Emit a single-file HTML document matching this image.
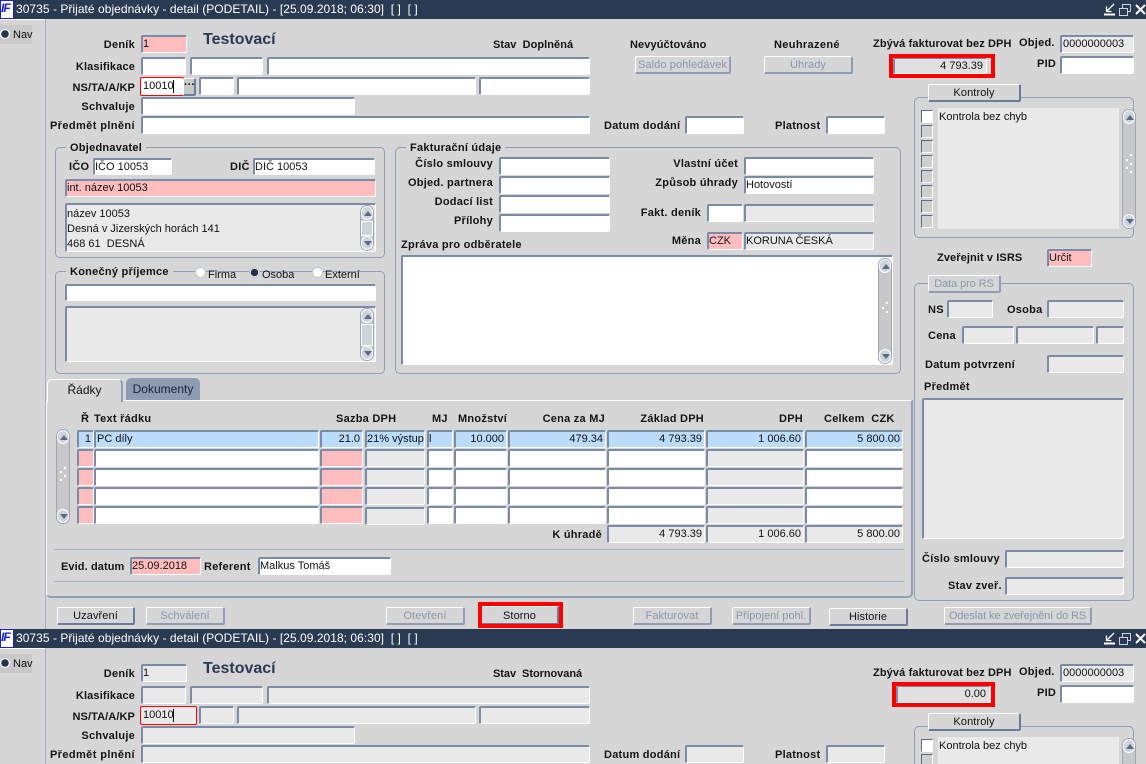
<!DOCTYPE html>
<html><head><meta charset="utf-8"><style>
html,body{margin:0;padding:0;width:1146px;height:764px;overflow:hidden;background:#d6d6d6}
body{position:relative;font:11px "Liberation Sans",Arial,sans-serif;color:#111}
div,span,svg{position:absolute;box-sizing:border-box}
.t{left:0;width:1146px;height:19px;background:#2a3a52;color:#fff;font-size:12px;line-height:19px;white-space:pre;letter-spacing:.04px}
.f{background:#fff;border:1px solid #fff;border-top:2px solid #7b8aa7;border-left:2px solid #7b8aa7;border-radius:2px;padding-left:0;line-height:14px;white-space:nowrap;overflow:hidden;font-size:11px}
.g{background:#e9e9e9}.p{background:#ffbdbd}.b{background:#bcdcfc}.r{text-align:right;padding-right:2px}
.l{font-weight:bold;white-space:nowrap;line-height:14px;letter-spacing:.25px;color:#141414}
.n{white-space:nowrap;line-height:14px}
.o{border:1px solid #8f9eb6;border-radius:5px}
.h{background:#d6d6d6;padding:0 4px;font-weight:bold;line-height:14px;white-space:nowrap;letter-spacing:.25px}
.btn{background:#d6d6d6;border:1px solid #fff;border-right:2px solid #6b7b9b;border-bottom:2px solid #6b7b9b;border-radius:2px;text-align:center;line-height:17px;white-space:nowrap;letter-spacing:.1px}
.dis{color:#8a97ad;border-color:#fff #8f9eb6 #8f9eb6 #fff}
.s{background:#c8c8c8;border:1px solid #9aa6bb;border-radius:7px}
.sb{left:0;width:100%;height:14px;background:#cfd3da;border:1px solid #fff;border-radius:6px}
.up,.dn{left:2px;width:0;height:0;border-left:4px solid transparent;border-right:4px solid transparent}
.up{top:4px;border-bottom:5px solid #5a6a8a}.dn{top:4px;border-top:5px solid #5a6a8a}
.c{width:12px;height:13px;background:#cfcfcf;border:1px solid #fff;border-top:1px solid #5a6a8a;border-left:1px solid #5a6a8a}
.rd{width:11px;height:11px;border-radius:50%;background:#fff;border:1px solid #c0c8d4}
.rk{background:radial-gradient(circle,#263248 0 3.5px,#fff 4px)}
.ln{height:1px;background:#a3afc3}
.rb{border:4px solid #f00}
.dot{width:2px;height:2px;background:#fff}
</style></head><body>

<div class="t" style="top:0"><div style="left:0;top:0;width:14px;height:19px;background:#fff;border:1px solid #1a22c8;color:#1a22c8;font:italic bold 12px/15px 'Liberation Sans',sans-serif;padding-left:0;letter-spacing:-1px">IF</div><span style="left:16px;top:0">30735 - Přijaté objednávky - detail (PODETAIL) - [25.09.2018; 06:30]  [ ]  [ ]</span>
<svg style="left:1102px;top:2px" width="44" height="15" fill="none" stroke="#fff"><path d="M2 12.500h11" stroke-width="2"/><path d="M12 2L5 9M4.500 4.500v5h5" stroke-width="1.300"/><path d="M17.500 6.500h8v7h-8zM20.500 6V2.500h8v7H26" stroke="#cdd3dc" stroke-width="1"/><path d="M34 3l9 9M43 3l-9 9" stroke-width="2"/></svg></div>
<div style="left:0;top:25px;width:32px;height:19px;background:#c9c9c9"></div>
<div class="rd rk" style="left:-1px;top:28px;width:12px;height:12px"></div><span class="n" style="left:13px;top:28px">Nav</span>
<div style="left:45px;top:19px;width:1px;height:610px;background:#a3afc3"></div>
<div style="left:0;top:19px;width:45px;height:1px;background:#fff"></div>

<span class="l" style="right:1011px;top:38px">Deník</span><div class="f p" style="left:141px;top:35px;width:46px;height:18px">1</div>
<span class="l" style="left:203px;top:32px;font-size:16px;line-height:16px;color:#2a3a52;letter-spacing:0">Testovací</span>
<span class="l" style="right:1011px;top:60px;letter-spacing:.15px">Klasifikace</span>
<div class="f" style="left:141px;top:57px;width:45px;height:18px"></div><div class="f" style="left:190px;top:57px;width:73px;height:18px"></div><div class="f" style="left:267px;top:57px;width:323px;height:18px"></div>
<span class="l" style="right:1011px;top:81px;letter-spacing:.1px">NS/TA/A/KP</span>
<div class="f" style="left:140px;top:77px;width:44px;height:19px;border:1px solid #f00;background:#fff;line-height:17px;padding-left:2px">10010<span style="left:32px;top:2px;width:1px;height:13px;background:#000"></span></div>
<div class="btn" style="left:183px;top:78px;width:13px;height:18px;background:#c8c8c8;font-weight:bold;line-height:12px;letter-spacing:0">···</div>
<div class="f" style="left:199px;top:77px;width:35px;height:18px"></div><div class="f" style="left:237px;top:77px;width:239px;height:18px"></div><div class="f" style="left:479px;top:77px;width:111px;height:18px"></div>
<span class="l" style="right:1011px;top:100px">Schvaluje</span><div class="f" style="left:141px;top:97px;width:214px;height:18px"></div>
<span class="l" style="right:1011px;top:119px;letter-spacing:.4px">Předmět plnění</span><div class="f" style="left:141px;top:116px;width:449px;height:18px"></div>

<span class="l" style="left:493px;top:38px;letter-spacing:.05px">Stav&nbsp; Doplněná</span>
<span class="l" style="left:630px;top:38px;letter-spacing:.1px">Nevyúčtováno</span><span class="l" style="left:774px;top:38px;letter-spacing:.35px">Neuhrazené</span>
<div class="btn dis" style="left:635px;top:56px;width:96px;height:18px">Saldo pohledávek</div>
<div class="btn dis" style="left:764px;top:56px;width:89px;height:18px">Úhrady</div>
<span class="l" style="left:604px;top:119px">Datum dodání</span><div class="f" style="left:685px;top:116px;width:59px;height:18px"></div>
<span class="l" style="left:775px;top:119px">Platnost</span><div class="f" style="left:826px;top:116px;width:59px;height:18px"></div>

<span class="l" style="left:873px;top:37px;letter-spacing:.12px">Zbývá fakturovat bez DPH</span>
<span class="l" style="left:1019px;top:36px">Objed.</span><div class="f g" style="left:1060px;top:35px;width:74px;height:18px;padding-left:1px">0000000003</div>
<span class="l" style="left:1037px;top:57px">PID</span><div class="f" style="left:1060px;top:56px;width:74px;height:18px"></div>
<div class="rb" style="left:889px;top:54px;width:106px;height:24px"></div><div class="f r g" style="left:893px;top:58px;width:94px;height:16px;background:#e0e0e0;line-height:15px;border-top-width:1px;padding-right:3px">4 793.39</div>

<div class="o" style="left:914px;top:97px;width:220px;height:141px"></div>
<div class="btn" style="left:928px;top:84px;width:93px;height:18px">Kontroly</div>
<div style="left:938px;top:108px;width:181px;height:121px;background:#e9e9e9"></div>
<span class="n" style="left:939px;top:110px">Kontrola bez chyb</span>
<div class="c" style="left:921px;top:110px;background:#fff"></div>
<div class="c" style="left:921px;top:125px"></div><div class="c" style="left:921px;top:140px"></div><div class="c" style="left:921px;top:155px"></div><div class="c" style="left:921px;top:170px"></div><div class="c" style="left:921px;top:185px"></div><div class="c" style="left:921px;top:200px"></div><div class="c" style="left:921px;top:215px"></div>
<div class="s" style="left:1122px;top:109px;width:14px;height:120px"><div class="sb" style="top:0"><div class="up"></div></div><div class="sb" style="bottom:0"><div class="dn"></div></div><div class="dot" style="left:7px;top:44px"></div><div class="dot" style="left:3px;top:49px"></div><div class="dot" style="left:7px;top:53px"></div><div class="dot" style="left:3px;top:57px"></div><div class="dot" style="left:7px;top:61px"></div></div>

<span class="l" style="left:937px;top:251px;letter-spacing:.1px">Zveřejnit v ISRS</span><div class="f p" style="left:1047px;top:249px;width:45px;height:18px">Určit</div>

<div class="o" style="left:914px;top:283px;width:220px;height:318px"></div>
<div class="btn dis" style="left:928px;top:275px;width:73px;height:18px;letter-spacing:-.1px">Data pro RS</div>
<span class="l" style="left:928px;top:303px">NS</span><div class="f g" style="left:947px;top:300px;width:46px;height:18px"></div>
<span class="l" style="left:1007px;top:303px">Osoba</span><div class="f g" style="left:1047px;top:300px;width:77px;height:18px"></div>
<span class="l" style="left:928px;top:329px">Cena</span><div class="f g" style="left:962px;top:326px;width:52px;height:18px"></div><div class="f g" style="left:1016px;top:326px;width:78px;height:18px"></div><div class="f g" style="left:1096px;top:326px;width:28px;height:18px"></div>
<span class="l" style="left:925px;top:358px">Datum potvrzení</span><div class="f g" style="left:1047px;top:355px;width:77px;height:18px"></div>
<span class="l" style="left:924px;top:380px">Předmět</span><div class="f g" style="left:922px;top:398px;width:202px;height:141px"></div>
<span class="l" style="left:922px;top:552px">Číslo smlouvy</span><div class="f g" style="left:1005px;top:550px;width:119px;height:18px"></div>
<span class="l" style="left:948px;top:579px">Stav zveř.</span><div class="f g" style="left:1005px;top:577px;width:119px;height:18px"></div>

<div class="o" style="left:55px;top:147px;width:330px;height:111px"></div><span class="h" style="left:66px;top:141px">Objednavatel</span>
<span class="l" style="left:69px;top:160px">IČO</span><div class="f" style="left:93px;top:158px;width:79px;height:17px">IČO 10053</div>
<span class="l" style="left:230px;top:160px">DIČ</span><div class="f" style="left:253px;top:158px;width:122px;height:17px">DIČ 10053</div>
<div class="f p" style="left:65px;top:179px;width:311px;height:18px">int. název 10053</div>
<div class="f g" style="left:65px;top:203px;width:311px;height:49px;line-height:15px;padding-top:2px">název 10053<br>Desná v Jizerských horách 141<br>468 61&nbsp; DESNÁ</div>
<div class="s" style="left:360px;top:205px;width:14px;height:46px"><div class="sb" style="top:0"><div class="up"></div></div><div class="sb" style="top:15px;height:15px;border-radius:0"></div><div class="sb" style="bottom:0"><div class="dn"></div></div></div>

<div class="o" style="left:55px;top:271px;width:330px;height:103px"></div><span class="h" style="left:66px;top:265px">Konečný příjemce</span>
<div class="rd" style="left:195px;top:267px"></div><span class="n" style="left:208px;top:268px">Firma</span>
<div class="rd rk" style="left:249px;top:267px"></div><span class="n" style="left:262px;top:268px">Osoba</span>
<div class="rd" style="left:312px;top:267px"></div><span class="n" style="left:325px;top:268px">Externí</span>
<div class="f" style="left:65px;top:284px;width:311px;height:17px"></div>
<div class="f g" style="left:65px;top:306px;width:311px;height:56px"></div>
<div class="s" style="left:360px;top:308px;width:14px;height:53px"><div class="sb" style="top:0"><div class="up"></div></div><div class="sb" style="top:15px;height:22px;border-radius:0"></div><div class="sb" style="bottom:0"><div class="dn"></div></div></div>

<div class="o" style="left:395px;top:147px;width:506px;height:227px"></div><span class="h" style="left:406px;top:141px">Fakturační údaje</span>
<span class="l" style="right:653px;top:157px">Číslo smlouvy</span><div class="f" style="left:499px;top:157px;width:111px;height:18px"></div>
<span class="l" style="right:653px;top:176px">Objed. partnera</span><div class="f" style="left:499px;top:176px;width:111px;height:18px"></div>
<span class="l" style="right:653px;top:195px">Dodací list</span><div class="f" style="left:499px;top:195px;width:111px;height:18px"></div>
<span class="l" style="right:653px;top:214px">Přílohy</span><div class="f" style="left:499px;top:214px;width:111px;height:18px"></div>
<span class="l" style="right:408px;top:157px">Vlastní účet</span><div class="f" style="left:744px;top:157px;width:130px;height:18px"></div>
<span class="l" style="right:408px;top:176px">Způsob úhrady</span><div class="f" style="left:744px;top:176px;width:130px;height:18px">Hotovostí</div>
<span class="l" style="right:445px;top:206px">Fakt. deník</span><div class="f" style="left:707px;top:204px;width:36px;height:18px"></div><div class="f g" style="left:744px;top:204px;width:130px;height:18px"></div>
<span class="l" style="right:445px;top:234px">Měna</span><div class="f p" style="left:707px;top:232px;width:36px;height:18px">CZK</div><div class="f g" style="left:744px;top:232px;width:130px;height:18px">KORUNA ČESKÁ</div>
<span class="l" style="left:401px;top:238px">Zpráva pro odběratele</span>
<div class="f" style="left:401px;top:255px;width:492px;height:110px"></div>
<div class="s" style="left:878px;top:258px;width:14px;height:106px"><div class="sb" style="top:0"><div class="up"></div></div><div class="sb" style="bottom:0"><div class="dn"></div></div><div class="dot" style="left:7px;top:43px"></div><div class="dot" style="left:3px;top:48px"></div><div class="dot" style="left:7px;top:52px"></div></div>

<div style="left:46px;top:400px;width:867px;height:198px;background:#d6d6d6;border:1px solid #8f9eb6;border-top:1px solid #fff;border-left:1px solid #fff;border-radius:0 0 5px 5px;border-bottom-width:2px;border-right-width:2px"></div>
<div style="left:47px;top:379px;width:76px;height:23px;background:#d6d6d6;border:1px solid #fff;border-bottom:0;border-right:2px solid #8f9eb6;border-radius:5px 5px 0 0;text-align:center;line-height:21px;font-size:12px">Řádky</div>
<div style="left:126px;top:378px;width:74px;height:22px;background:#8d9bb3;border-radius:5px 5px 0 0;text-align:center;line-height:22px;font-size:12px;color:#1a2436">Dokumenty</div>

<span class="l" style="left:81px;top:412px">Ř</span><span class="l" style="left:94px;top:412px">Text řádku</span><span class="l" style="left:336px;top:412px">Sazba DPH</span><span class="l" style="left:432px;top:412px">MJ</span><span class="l" style="left:458px;top:412px">Množství</span><span class="l" style="right:541px;top:412px">Cena za MJ</span><span class="l" style="right:442px;top:412px">Základ DPH</span><span class="l" style="right:343px;top:412px">DPH</span><span class="l" style="left:824px;top:412px">Celkem&nbsp; CZK</span>

<div class="f b r" style="left:77px;top:430px;width:17px;height:18px">1</div><div class="f b" style="left:94px;top:430px;width:225px;height:18px;padding-left:1px">PC díly</div><div class="f b r" style="left:320px;top:430px;width:43px;height:18px">21.0</div><div class="f b" style="left:365px;top:430px;width:60px;height:18px">21% výstup</div><div class="f b" style="left:427px;top:430px;width:26px;height:18px">l</div><div class="f b r" style="left:454px;top:430px;width:53px;height:18px">10.000</div><div class="f b r" style="left:508px;top:430px;width:98px;height:18px">479.34</div><div class="f b r" style="left:607px;top:430px;width:98px;height:18px">4 793.39</div><div class="f b r" style="left:706px;top:430px;width:98px;height:18px">1 006.60</div><div class="f b r" style="left:805px;top:430px;width:98px;height:18px">5 800.00</div>

<div class="f p" style="left:77px;top:449px;width:17px;height:18px"></div><div class="f" style="left:94px;top:449px;width:225px;height:18px"></div><div class="f p" style="left:320px;top:449px;width:43px;height:18px"></div><div class="f g" style="left:365px;top:449px;width:60px;height:18px"></div><div class="f" style="left:427px;top:449px;width:26px;height:18px"></div><div class="f" style="left:454px;top:449px;width:53px;height:18px"></div><div class="f" style="left:508px;top:449px;width:98px;height:18px"></div><div class="f" style="left:607px;top:449px;width:98px;height:18px"></div><div class="f g" style="left:706px;top:449px;width:98px;height:18px"></div><div class="f" style="left:805px;top:449px;width:98px;height:18px"></div>

<div class="f p" style="left:77px;top:468px;width:17px;height:18px"></div><div class="f" style="left:94px;top:468px;width:225px;height:18px"></div><div class="f p" style="left:320px;top:468px;width:43px;height:18px"></div><div class="f g" style="left:365px;top:468px;width:60px;height:18px"></div><div class="f" style="left:427px;top:468px;width:26px;height:18px"></div><div class="f" style="left:454px;top:468px;width:53px;height:18px"></div><div class="f" style="left:508px;top:468px;width:98px;height:18px"></div><div class="f" style="left:607px;top:468px;width:98px;height:18px"></div><div class="f g" style="left:706px;top:468px;width:98px;height:18px"></div><div class="f" style="left:805px;top:468px;width:98px;height:18px"></div>

<div class="f p" style="left:77px;top:487px;width:17px;height:18px"></div><div class="f" style="left:94px;top:487px;width:225px;height:18px"></div><div class="f p" style="left:320px;top:487px;width:43px;height:18px"></div><div class="f g" style="left:365px;top:487px;width:60px;height:18px"></div><div class="f" style="left:427px;top:487px;width:26px;height:18px"></div><div class="f" style="left:454px;top:487px;width:53px;height:18px"></div><div class="f" style="left:508px;top:487px;width:98px;height:18px"></div><div class="f" style="left:607px;top:487px;width:98px;height:18px"></div><div class="f g" style="left:706px;top:487px;width:98px;height:18px"></div><div class="f" style="left:805px;top:487px;width:98px;height:18px"></div>

<div class="f p" style="left:77px;top:506px;width:17px;height:18px"></div><div class="f" style="left:94px;top:506px;width:225px;height:18px"></div><div class="f p" style="left:320px;top:506px;width:43px;height:18px"></div><div class="f g" style="left:365px;top:507px;width:60px;height:18px"></div><div class="f" style="left:427px;top:506px;width:26px;height:18px"></div><div class="f" style="left:454px;top:506px;width:53px;height:18px"></div><div class="f" style="left:508px;top:506px;width:98px;height:18px"></div><div class="f" style="left:607px;top:506px;width:98px;height:18px"></div><div class="f g" style="left:706px;top:506px;width:98px;height:18px"></div><div class="f" style="left:805px;top:506px;width:98px;height:18px"></div>

<div class="s" style="left:56px;top:429px;width:14px;height:95px"><div class="sb" style="top:0"><div class="up"></div></div><div class="sb" style="bottom:0"><div class="dn"></div></div><div class="dot" style="left:7px;top:37px"></div><div class="dot" style="left:3px;top:41px"></div><div class="dot" style="left:7px;top:45px"></div><div class="dot" style="left:3px;top:49px"></div></div>

<span class="l" style="right:544px;top:528px">K úhradě</span><div class="f g r" style="left:607px;top:525px;width:98px;height:18px">4 793.39</div><div class="f g r" style="left:706px;top:525px;width:98px;height:18px">1 006.60</div><div class="f g r" style="left:805px;top:525px;width:98px;height:18px">5 800.00</div>

<div class="ln" style="left:54px;top:549px;width:850px"></div><div class="ln" style="left:54px;top:581px;width:850px"></div>
<span class="l" style="left:61px;top:560px;letter-spacing:.1px">Evid. datum</span><div class="f p" style="left:130px;top:557px;width:71px;height:18px">25.09.2018</div>
<span class="l" style="left:204px;top:560px">Referent</span><div class="f" style="left:258px;top:557px;width:133px;height:18px">Malkus Tomáš</div>

<div class="btn" style="left:57px;top:607px;width:78px;height:18px">Uzavření</div>
<div class="btn dis" style="left:146px;top:607px;width:79px;height:18px">Schválení</div>
<div class="btn dis" style="left:386px;top:607px;width:79px;height:18px">Otevření</div>
<div class="btn" style="left:481px;top:606px;width:78px;height:19px;line-height:19px">Storno</div><div class="rb" style="left:478px;top:602px;width:85px;height:26px"></div>
<div class="btn dis" style="left:633px;top:607px;width:79px;height:18px">Fakturovat</div>
<div class="btn dis" style="left:732px;top:607px;width:79px;height:18px;letter-spacing:0">Připojení pohl.</div>
<div class="btn" style="left:829px;top:608px;width:79px;height:18px">Historie</div>
<div class="btn dis" style="left:944px;top:607px;width:148px;height:18px;letter-spacing:-.1px">Odeslat ke zveřejnění do RS</div>

<div class="t" style="top:629px"><div style="left:0;top:0;width:14px;height:19px;background:#fff;border:1px solid #1a22c8;color:#1a22c8;font:italic bold 12px/15px 'Liberation Sans',sans-serif;letter-spacing:-1px">IF</div><span style="left:16px;top:0">30735 - Přijaté objednávky - detail (PODETAIL) - [25.09.2018; 06:30]  [ ]  [ ]</span>
<svg style="left:1102px;top:2px" width="44" height="15" fill="none" stroke="#fff"><path d="M2 12.500h11" stroke-width="2"/><path d="M12 2L5 9M4.500 4.500v5h5" stroke-width="1.300"/><path d="M17.500 6.500h8v7h-8zM20.500 6V2.500h8v7H26" stroke="#cdd3dc" stroke-width="1"/><path d="M34 3l9 9M43 3l-9 9" stroke-width="2"/></svg></div>
<div style="left:0;top:654px;width:32px;height:19px;background:#c9c9c9"></div>
<div class="rd rk" style="left:-1px;top:657px;width:12px;height:12px"></div><span class="n" style="left:13px;top:657px">Nav</span>
<div style="left:45px;top:648px;width:1px;height:116px;background:#a3afc3"></div>
<div style="left:0;top:648px;width:45px;height:1px;background:#fff"></div>

<span class="l" style="right:1011px;top:667px">Deník</span><div class="f g" style="left:141px;top:664px;width:46px;height:18px">1</div>
<span class="l" style="left:203px;top:661px;font-size:16px;line-height:16px;color:#2a3a52;letter-spacing:0">Testovací</span>
<span class="l" style="right:1011px;top:689px;letter-spacing:.15px">Klasifikace</span>
<div class="f g" style="left:141px;top:686px;width:45px;height:18px"></div><div class="f g" style="left:190px;top:686px;width:73px;height:18px"></div><div class="f g" style="left:267px;top:686px;width:323px;height:18px"></div>
<span class="l" style="right:1011px;top:710px;letter-spacing:.1px">NS/TA/A/KP</span>
<div class="f" style="left:140px;top:706px;width:57px;height:19px;border:1px solid #f00;background:#e9e9e9;line-height:17px;padding-left:2px">10010<span style="left:32px;top:2px;width:1px;height:13px;background:#000"></span></div>
<div class="f g" style="left:199px;top:706px;width:35px;height:18px"></div><div class="f g" style="left:237px;top:706px;width:239px;height:18px"></div><div class="f g" style="left:479px;top:706px;width:111px;height:18px"></div>
<span class="l" style="right:1011px;top:729px">Schvaluje</span><div class="f g" style="left:141px;top:726px;width:214px;height:18px"></div>
<span class="l" style="right:1011px;top:748px;letter-spacing:.4px">Předmět plnění</span><div class="f g" style="left:141px;top:745px;width:449px;height:18px"></div>
<span class="l" style="left:493px;top:667px;letter-spacing:-.05px">Stav&nbsp; Stornovaná</span>
<span class="l" style="left:604px;top:748px">Datum dodání</span><div class="f g" style="left:685px;top:745px;width:59px;height:18px"></div>
<span class="l" style="left:775px;top:748px">Platnost</span><div class="f g" style="left:826px;top:745px;width:59px;height:18px"></div>
<span class="l" style="left:873px;top:666px;letter-spacing:.12px">Zbývá fakturovat bez DPH</span>
<span class="l" style="left:1019px;top:665px">Objed.</span><div class="f g" style="left:1060px;top:664px;width:74px;height:18px;padding-left:1px">0000000003</div>
<span class="l" style="left:1037px;top:686px">PID</span><div class="f" style="left:1060px;top:685px;width:74px;height:18px"></div>
<div class="rb" style="left:892px;top:682px;width:103px;height:25px"></div><div class="f r" style="left:896px;top:686px;width:94px;height:17px;background:#e0e0e0;line-height:15px;border-top-width:1px;padding-right:3px">0.00</div>
<div class="o" style="left:914px;top:726px;width:220px;height:60px"></div>
<div class="btn" style="left:928px;top:713px;width:93px;height:18px">Kontroly</div>
<div style="left:938px;top:737px;width:181px;height:27px;background:#e9e9e9"></div>
<span class="n" style="left:939px;top:739px">Kontrola bez chyb</span>
<div class="c" style="left:921px;top:739px;background:#fff"></div><div class="c" style="left:921px;top:754px"></div>
<div class="s" style="left:1122px;top:738px;width:14px;height:40px"><div class="sb" style="top:0"><div class="up"></div></div></div>
</body></html>
